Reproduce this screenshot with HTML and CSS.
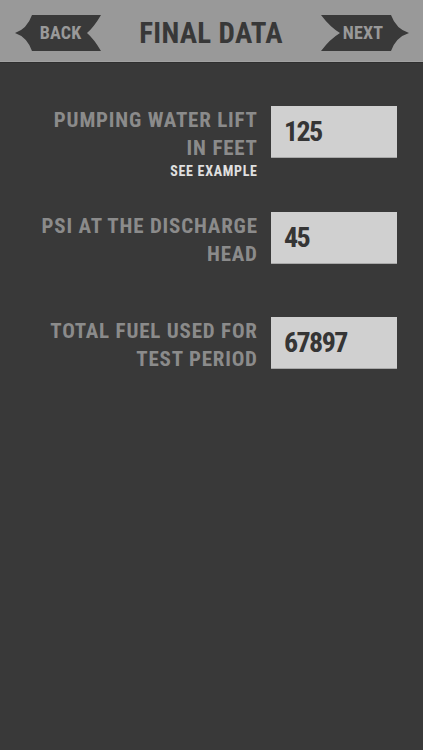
FILE: index.html
```html
<!DOCTYPE html>
<html>
<head>
<meta charset="utf-8">
<link rel="stylesheet" href="styles.css">
</head>
<body>
<div class="screen">
  <header class="topbar">
    <a class="nav nav-back">
      <svg class="nav-shape" viewBox="0 0 86 36" width="86" height="36"><path d="M17 0 H86 Q79 12 72 18 Q79 24 86 36 H17 Q12 22 0 18 Q12 14 17 0 Z" fill="#393939"/></svg>
      <span class="nav-label">BACK</span>
    </a>
    <h1 class="title">FINAL DATA</h1>
    <a class="nav nav-next">
      <svg class="nav-shape" viewBox="0 0 88 36" width="88" height="36"><path d="M0 0 H70 Q75 14 88 18 Q75 22 70 36 H0 Q9 24 19 18 Q9 12 0 0 Z" fill="#393939"/></svg>
      <span class="nav-label">NEXT</span>
    </a>
  </header>
  <main class="form">
    <div class="row">
      <div class="label">
        <div class="label-text">PUMPING WATER LIFT<br>IN FEET</div>
        <div class="hint">SEE EXAMPLE</div>
      </div>
      <div class="field">125</div>
    </div>
    <div class="row">
      <div class="label">
        <div class="label-text">PSI AT THE DISCHARGE<br>HEAD</div>
      </div>
      <div class="field">45</div>
    </div>
    <div class="row">
      <div class="label">
        <div class="label-text">TOTAL FUEL USED FOR<br>TEST PERIOD</div>
      </div>
      <div class="field">67897</div>
    </div>
  </main>
</div>
</body>
</html>
```
FILE: styles.css
```css
html, body {
  margin: 0;
  padding: 0;
  background: #393939;
}
body {
  font-family: "Roboto Condensed", "Open Sans", "Liberation Sans", sans-serif;
  font-stretch: condensed;
  font-weight: bold;
}
.screen {
  width: 423px;
  min-height: 750px;
  background: #393939;
}
.topbar {
  height: 62px;
  box-sizing: border-box;
  background: #999999;
  border-bottom: 1px solid #a2a2a2;
  box-shadow: 0 1px 0 #2f2f2f;
  display: flex;
  align-items: flex-start;
  justify-content: space-between;
  padding: 15px 14px 0 15px;
}
.nav {
  position: relative;
  height: 36px;
  display: flex;
  align-items: center;
  justify-content: center;
}
.nav-back { width: 86px; }
.nav-next { width: 88px; }
.nav-shape {
  position: absolute;
  left: 0;
  top: 0;
}
.nav-label {
  position: relative;
  color: #999999;
  font-size: 18px;
  line-height: 1;
  letter-spacing: 0.2px;
}
.nav-back .nav-label { margin-left: 5px; }
.nav-next .nav-label { margin-right: 4px; }
.title {
  margin: 4px 0 0 0;
  font-size: 29px;
  color: #383838;
  font-weight: bold;
  line-height: 1;
  letter-spacing: 0.3px;
}
.form {
  padding-top: 44px;
  display: flex;
  flex-direction: column;
  gap: 53.5px;
}
.row {
  height: 52px;
  display: flex;
  justify-content: flex-end;
  align-items: flex-start;
  gap: 14px;
  padding-right: 26px;
}
.label {
  text-align: right;
}
.label-text {
  color: #8b8b8b;
  font-size: 21px;
  line-height: 28px;
  letter-spacing: 0.8px;
  margin-right: -0.8px;
}
.hint {
  color: #e0e0e0;
  font-size: 14px;
  line-height: 16px;
  margin-top: 1px;
  letter-spacing: 0.7px;
  margin-right: -0.7px;
}
.field {
  width: 126px;
  height: 52px;
  box-sizing: border-box;
  background: #d0d0d0;
  border-bottom: 1px solid #a8a8a8;
  color: #353535;
  font-size: 28px;
  line-height: 51px;
  padding-left: 13px;
  letter-spacing: -1.6px;
}
```
